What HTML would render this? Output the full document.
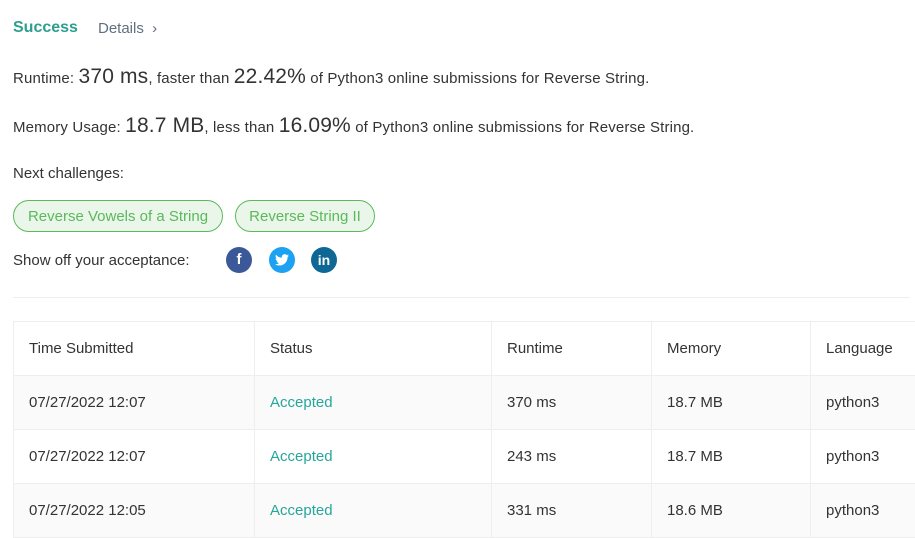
<!DOCTYPE html>
<html><head><style>
body{margin:0;width:915px;height:536px;overflow:hidden;background:#fff;font-family:"Liberation Sans",sans-serif;color:#333;font-size:15px}
.a{position:absolute;white-space:nowrap}
.big{font-size:21px}
.pill{position:absolute;top:200px;height:32px;border:1px solid #5cb85c;border-radius:16px;background:#e9f6e9;color:#5cb85c;font-size:15px;line-height:31px;text-align:center;box-sizing:border-box}
.ic{position:absolute;top:247px;width:26px;height:26px;border-radius:50%;color:#fff;font-weight:bold;text-align:center;line-height:26px;font-size:15px}
table{position:absolute;left:13px;top:321px;border-collapse:collapse;table-layout:fixed;font-size:15px;color:#333}
td{border:1px solid #eee;height:54px;padding:0 0 0 15px;box-sizing:border-box}
tr.g td{background:#fafafa}
.ok{color:#26a69a}
</style></head><body>
<div class="a" style="left:13px;top:19px;font-size:16px;font-weight:bold;color:#2e9e8f">Success</div>
<div class="a" style="left:98px;top:20px;font-size:15px;color:#607080">Details &nbsp;›</div>
<div class="a" style="left:13px;top:65px;letter-spacing:0.15px">Runtime: <span class="big">370 ms</span>, faster than <span class="big">22.42%</span> of Python3 online submissions for Reverse String.</div>
<div class="a" style="left:13px;top:114px;letter-spacing:0.15px">Memory Usage: <span class="big">18.7 MB</span>, less than <span class="big">16.09%</span> of Python3 online submissions for Reverse String.</div>
<div class="a" style="left:13px;top:165px">Next challenges:</div>
<div class="pill" style="left:13px;width:210px">Reverse Vowels of a String</div>
<div class="pill" style="left:235px;width:140px">Reverse String II</div>
<div class="a" style="left:13px;top:252px">Show off your acceptance:</div>
<div class="ic" style="left:226px;background:#3b5998">f</div>
<div class="ic" style="left:269px;background:#1da1f2"><svg width="14" height="12" viewBox="0 0 24 20" style="margin-top:7px"><path fill="#fff" d="M24 2.4a10 10 0 0 1-2.8.8A5 5 0 0 0 23.3.4a10 10 0 0 1-3.1 1.2A4.9 4.9 0 0 0 11.8 6 14 14 0 0 1 1.7.9a4.9 4.9 0 0 0 1.5 6.6A4.900 4.900 0 0 1 1 6.9a4.9 4.9 0 0 0 3.9 4.8 5 5 0 0 1-2.2.1 4.9 4.9 0 0 0 4.600 3.4A9.900 9.900 0 0 1 0 17.2 14 14 0 0 0 7.5 19.5c9 0 14-7.500 14-14v-.6A10 10 0 0 0 24 2.4z"/></svg></div>
<div class="ic" style="left:311px;background:#0e6795;font-size:14px">in</div>
<div class="a" style="left:13px;top:297px;width:897px;height:1px;background:#eee"></div>
<table style="width:912px">
<colgroup><col style="width:241px"><col style="width:237px"><col style="width:160px"><col style="width:159px"><col style="width:115px"></colgroup>
<tr><td>Time Submitted</td><td>Status</td><td>Runtime</td><td>Memory</td><td>Language</td></tr>
<tr class="g"><td>07/27/2022 12:07</td><td class="ok">Accepted</td><td>370 ms</td><td>18.7 MB</td><td>python3</td></tr>
<tr><td>07/27/2022 12:07</td><td class="ok">Accepted</td><td>243 ms</td><td>18.7 MB</td><td>python3</td></tr>
<tr class="g"><td>07/27/2022 12:05</td><td class="ok">Accepted</td><td>331 ms</td><td>18.6 MB</td><td>python3</td></tr>
</table>
</body></html>
